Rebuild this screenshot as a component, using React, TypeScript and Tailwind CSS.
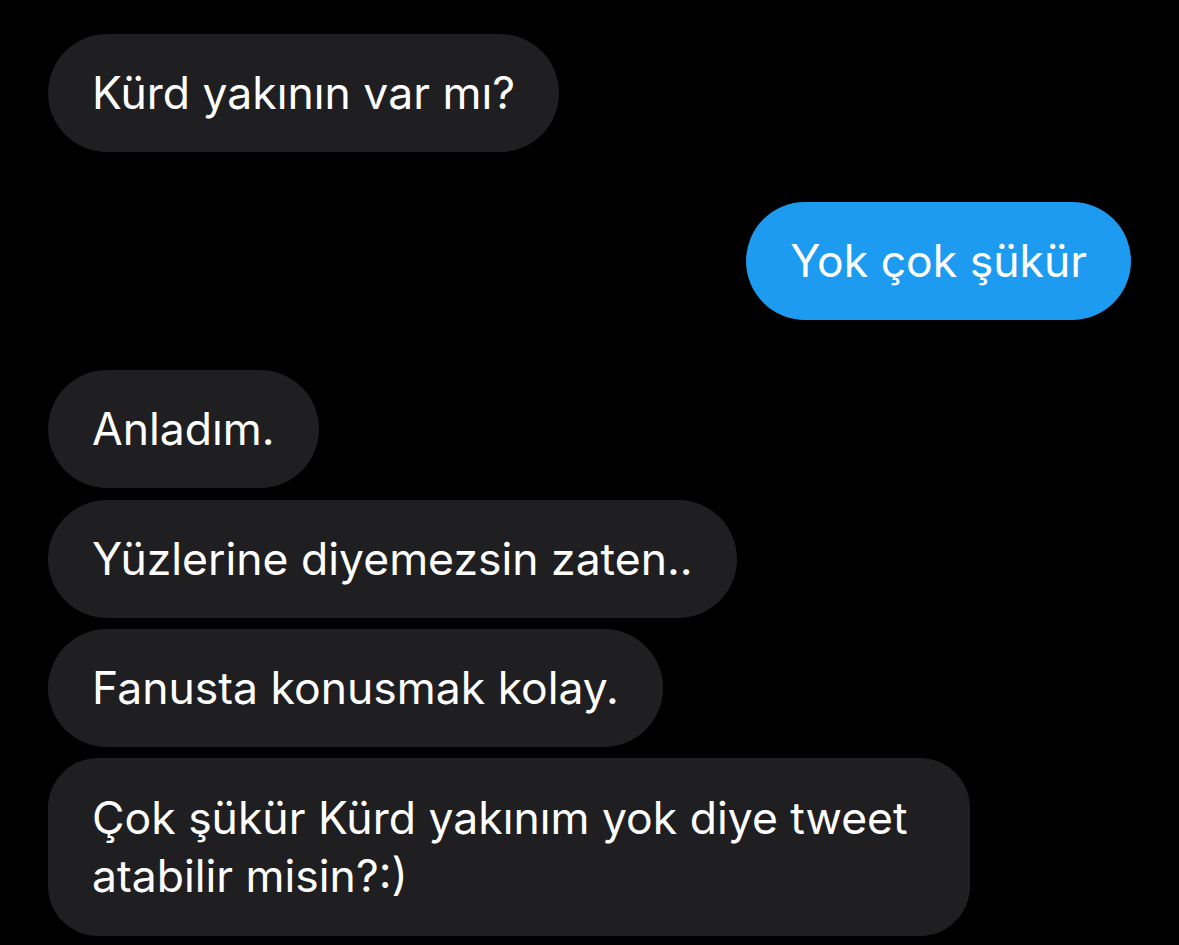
export default function App() {
  const grey = "rounded-[59px] bg-[#1f1f21] text-white px-[44px] py-[32px] leading-[54px] w-fit";
  return (
    <div className="min-h-screen bg-black px-[48px] pt-[34px] font-['Inter',sans-serif] text-[44.5px]">
      <div className="flex flex-col">
        <div className={grey}>Kürd yakının var mı?</div>
        <div className="mt-[50px] self-end rounded-[59px] bg-[#1d9bf0] text-white px-[44px] py-[32px] leading-[54px] w-fit">
          Yok çok şükür
        </div>
        <div className={grey + " mt-[50px]"}>Anladım.</div>
        <div className={grey + " mt-[12px]"}>Yüzlerine diyemezsin zaten..</div>
        <div className={grey + " mt-[11px]"}>Fanusta konusmak kolay.</div>
        <div className="mt-[11px] w-[922px] rounded-[50px] bg-[#1f1f21] text-white px-[44px] py-[31px] leading-[58px]">
          Çok şükür Kürd yakınım yok diye tweet atabilir misin?:)
        </div>
      </div>
    </div>
  );
}
